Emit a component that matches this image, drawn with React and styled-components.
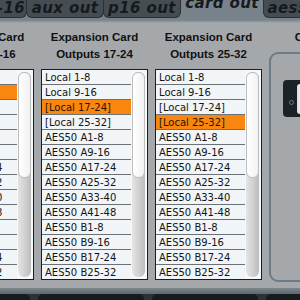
import React from 'react';
import styled, {createGlobalStyle} from 'styled-components';

const GlobalStyle = createGlobalStyle`
  html, body {
    margin: 0;
    padding: 0;
    background: #a4a8ab;
  }
  body {
    overflow: hidden;
  }
`;

const SOURCES = [
  'Local 1-8',
  'Local 9-16',
  '[Local 17-24]',
  '[Local 25-32]',
  'AES50 A1-8',
  'AES50 A9-16',
  'AES50 A17-24',
  'AES50 A25-32',
  'AES50 A33-40',
  'AES50 A41-48',
  'AES50 B1-8',
  'AES50 B9-16',
  'AES50 B17-24',
  'AES50 B25-32',
];

const COLUMNS = [
  {range: '9-16', selected: 1},
  {range: '17-24', selected: 2},
  {range: '25-32', selected: 3},
];

const TABS = ['out 1-16', 'aux out', 'p16 out', 'card out', 'aes50-a'];
const ACTIVE_TAB = 'card out';

const Screen = styled.div`
  width: 300px;
  height: 300px;
  overflow: hidden;
  display: flex;
  flex-direction: column;
  background: #a4a8ab;
`;

const TabStrip = styled.div`
  display: flex;
  height: 20px;
  margin-left: -51px;
  background: #77828a;
  flex: none;
`;

const Tab = styled.div`
  flex: none;
  box-sizing: border-box;
  width: ${(p) => (p.$active ? '84px' : '78px')};
  height: 18px;
  margin-right: -1px;
  background: ${(p) => (p.$active ? 'transparent' : '#454d53')};
  border: 1px solid ${(p) => (p.$active ? 'transparent' : '#2a3034')};
  border-top: none;
  border-radius: 0 0 6px 6px;
  font-family: 'DejaVu Sans', sans-serif;
  font-style: italic;
  font-weight: bold;
  font-size: 15px;
  letter-spacing: 0.4px;
  line-height: 16px;
  color: #161a1d;
  text-align: center;
  white-space: nowrap;
  overflow: hidden;
`;

const TabLabel = styled.span`
  display: inline-block;
  transform: translateY(${(p) => (p.$active ? '-5px' : '0')});
`;

const StripEdge = styled.div`
  height: 3px;
  flex: none;
  background: linear-gradient(#77828a, #a4a8ab);
`;

const Columns = styled.div`
  display: flex;
  gap: 7px;
  margin-left: -73px;
  flex: none;
`;

const Column = styled.div`
  flex: none;
  width: 107px;
  display: flex;
  flex-direction: column;
`;

const Header = styled.div`
  padding-top: 6px;
  height: 40px;
  font-family: 'Liberation Sans', Arial, sans-serif;
  font-weight: bold;
  font-size: 11.5px;
  line-height: 17px;
  color: #111;
  text-align: center;
  white-space: nowrap;
`;

const ListBox = styled.div`
  display: flex;
  box-sizing: border-box;
  height: 211px;
  border: 1px solid #1b1d1f;
  background: #f6f9fa;
`;

const Rows = styled.div`
  width: 89px;
  display: flex;
  flex-direction: column;
`;

const Row = styled.div`
  height: 14px;
  flex: none;
  border-bottom: 1px solid #6b7175;
  padding-left: 3px;
  background: ${(p) => (p.$selected ? '#f8860f' : '#f1f5f7')};
  color: ${(p) => (p.$selected ? '#2a1500' : '#141414')};
  font-family: 'DejaVu Sans', sans-serif;
  font-size: 10px;
  line-height: 16px;
  white-space: nowrap;
  overflow: hidden;

  &:last-child {
    border-bottom: none;
  }
`;

const ScrollArea = styled.div`
  flex: 1;
  display: flex;
  padding: 2px 2px 2px 1px;
`;

const Track = styled.div`
  flex: 1;
  display: flex;
  flex-direction: column;
  border-radius: 6px;
  background: linear-gradient(90deg, #e4e4e4, #d2d2d2 50%, #bcbcbc);
`;

const Thumb = styled.div`
  box-sizing: border-box;
  height: 106px;
  border: 1px solid #bdbdbd;
  border-radius: 6px;
  background: linear-gradient(90deg, #ffffff, #f1f1f1);
`;

const SidePanel = styled.div`
  box-sizing: border-box;
  height: 230px;
  margin-top: -17px;
  border: 2px solid #6c7b88;
  border-radius: 9px;
  padding: 26px 0 0 12px;
  background: #a4a8ab;
`;

const CardUnit = styled.div`
  width: 40px;
  height: 37px;
  border-radius: 4px;
  background: #1c2327;
  display: flex;
  align-items: center;
  gap: 3px;
  padding-left: 6px;
  box-sizing: border-box;
`;

const Led = styled.div`
  width: 3px;
  height: 3px;
  margin-top: 8px;
  border: 1px solid #6f7a80;
  border-radius: 50%;
`;

const Lever = styled.div`
  width: 6px;
  height: 30px;
  border-radius: 3px;
  background: linear-gradient(90deg, #d9dcde, #ffffff);
`;

const FooterEdge = styled.div`
  margin-top: 6px;
  height: 6px;
  flex: none;
  background: linear-gradient(#7b858c, #5d6870);
`;

const ButtonRow = styled.div`
  display: flex;
  gap: 8px;
  margin-left: -76px;
  flex: 1;
  background: #2b3236;
`;

const FooterButton = styled.div`
  flex: none;
  width: 106px;
  border-radius: 5px 5px 0 0;
  background: #161b1e;
`;

const SourceList = ({selected}) => (
  <ListBox>
    <Rows>
      {SOURCES.map((name, i) => (
        <Row key={name} $selected={i === selected}>
          {name}
        </Row>
      ))}
    </Rows>
    <ScrollArea>
      <Track>
        <Thumb />
      </Track>
    </ScrollArea>
  </ListBox>
);

const App = () => (
  <Screen>
    <GlobalStyle />
    <TabStrip>
      {TABS.map((t) => (
        <Tab key={t} $active={t === ACTIVE_TAB}>
          <TabLabel $active={t === ACTIVE_TAB}>{t}</TabLabel>
        </Tab>
      ))}
    </TabStrip>
    <StripEdge />
    <Columns>
      {COLUMNS.map((c) => (
        <Column key={c.range}>
          <Header>
            Expansion Card
            <br />
            Outputs {c.range}
          </Header>
          <SourceList selected={c.selected} />
        </Column>
      ))}
      <Column>
        <Header>Card Type</Header>
        <SidePanel>
          <CardUnit>
            <Led />
            <Lever />
          </CardUnit>
        </SidePanel>
      </Column>
    </Columns>
    <FooterEdge />
    <ButtonRow>
      <FooterButton />
      <FooterButton />
      <FooterButton />
      <FooterButton />
    </ButtonRow>
  </Screen>
);

export default App;
